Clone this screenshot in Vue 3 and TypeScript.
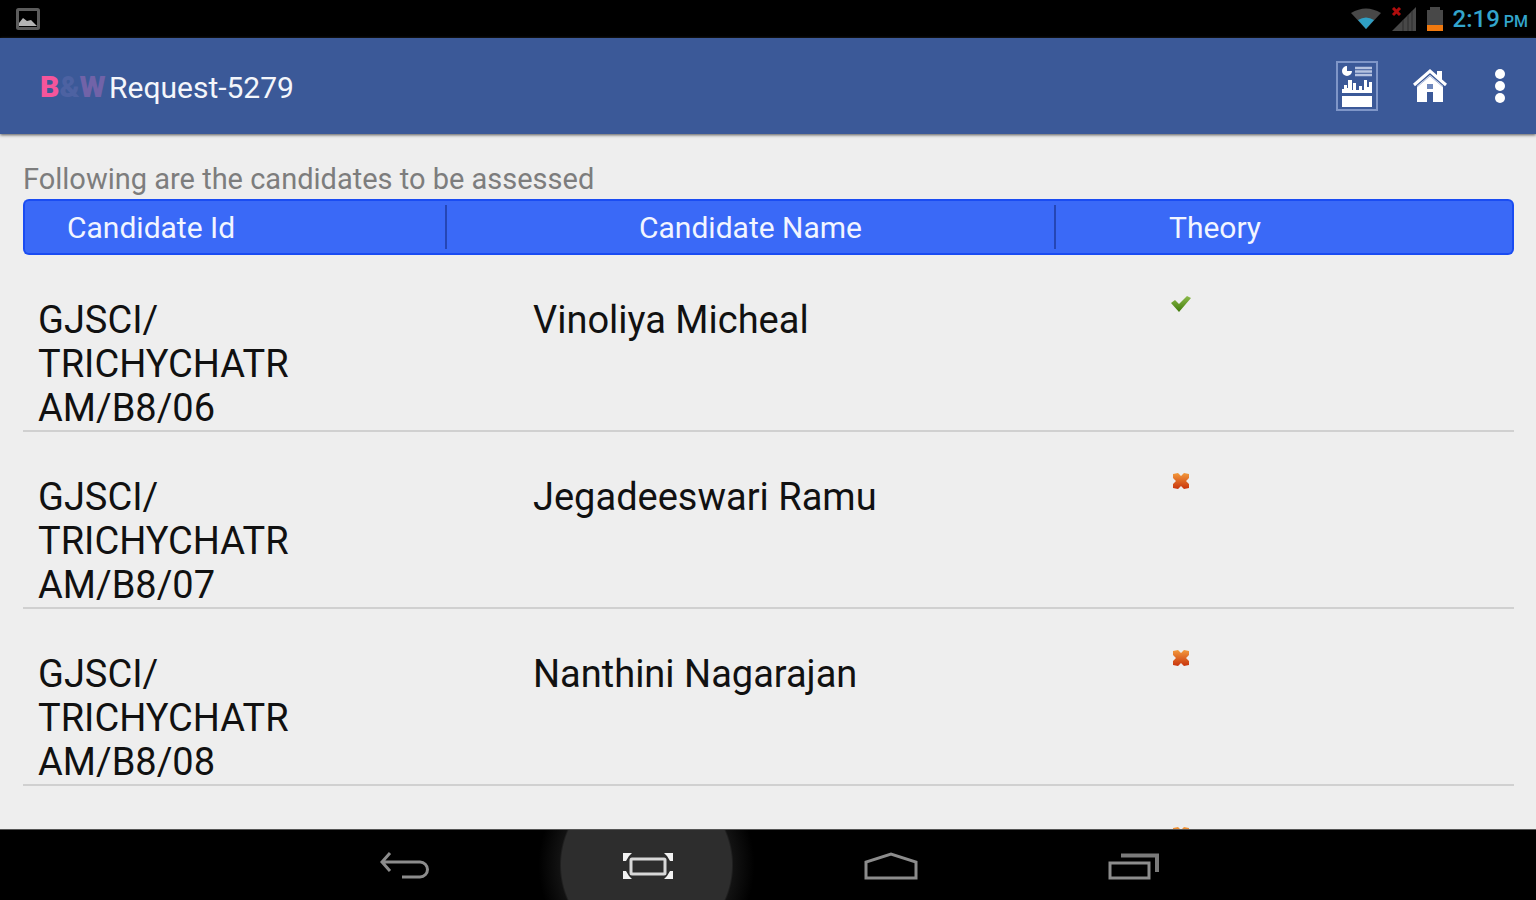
<script setup lang="ts">
interface Candidate {
  id: string[]
  name: string
  passed: boolean
}

const candidates: Candidate[] = [
  { id: ['GJSCI/', 'TRICHYCHATR', 'AM/B8/06'], name: 'Vinoliya Micheal', passed: true },
  { id: ['GJSCI/', 'TRICHYCHATR', 'AM/B8/07'], name: 'Jegadeeswari Ramu', passed: false },
  { id: ['GJSCI/', 'TRICHYCHATR', 'AM/B8/08'], name: 'Nanthini Nagarajan', passed: false },
  { id: [], name: '', passed: false },
]
</script>

<template>
  <div class="screen">
    <div class="status">
      <svg class="picture" width="24" height="22" viewBox="0 0 24 22">
        <rect x="1.5" y="1.5" width="21" height="19" rx="1" fill="none" stroke="#5c5c5c" stroke-width="3" />
        <path d="M3 18v-3l4-5 4 3 4-1 6 6z" fill="#b4b4b4" />
      </svg>
      <div class="tray">
        <svg width="32" height="22" viewBox="0 0 32 22">
          <path d="M1 5Q16-4 31 5L16 21z" fill="#484848" />
          <path d="M8 12Q16 7 24 12L16 21z" fill="#2f9fc4" />
        </svg>
        <svg width="26" height="25" viewBox="0 0 26 25">
          <path d="M1 24L25 0v24z" fill="#484848" />
          <path d="M12 13v11M17 8v16M21 4v20" stroke="#2c2c2c" stroke-width="1" />
          <path d="M2 1l7 7M9 1l-7 7" stroke="#b00d0d" stroke-width="3" />
        </svg>
        <svg width="18" height="24" viewBox="0 0 18 24">
          <path d="M1 24V3h3V0h10v3h3v21z" fill="#484848" />
          <rect x="1" y="18" width="16" height="6" fill="#f0790f" />
        </svg>
        <span class="clock">2:19<small>PM</small></span>
      </div>
    </div>

    <header class="bar">
      <span class="logo"><b>B</b><i>&amp;</i><em>W</em></span>
      <h1>Request-5279</h1>
      <div class="actions">
        <button type="button" aria-label="Report">
          <svg width="42" height="50" viewBox="0 0 42 50">
            <rect x="1" y="1" width="40" height="48" fill="none" stroke="#7f96c8" stroke-width="2" />
            <path d="M11 5v5h5a5 5 0 1 1-5-5z" fill="#fff" />
            <path d="M19 7h17M19 10.500h17M19 14h17" stroke="#b6c3e0" stroke-width="2.500" />
            <path d="M6 32v-4h2v-4h3v3h1v-8h4v10h1v-7h3v7h3v-4h3v4h2v-10h3v7h2v-5h3v11z" fill="#fff" />
            <rect x="6" y="35" width="30" height="11" fill="#fff" />
          </svg>
        </button>
        <button type="button" aria-label="Home">
          <svg width="34" height="34" viewBox="0 0 34 34">
            <path d="M4 17L17 6l13 11v16H20V23h-6v10H4z" fill="#fff" />
            <path d="M24 2h5v10l-5-4z" fill="#fff" />
            <path d="M1 16L17 2l16 14" fill="none" stroke="#fff" stroke-width="3" />
            <path d="M4 18L17 7l13 11" fill="none" stroke="#a9b8da" stroke-width="1" />
            <rect x="14" y="15" width="6" height="5" fill="#6f88bd" />
          </svg>
        </button>
        <button type="button" aria-label="More options">
          <svg width="12" height="36" viewBox="0 0 12 36">
            <g fill="#fff"><circle cx="6" cy="6" r="5" /><circle cx="6" cy="18" r="5" /><circle cx="6" cy="30" r="5" /></g>
          </svg>
        </button>
      </div>
    </header>

    <main class="content">
      <p>Following are the candidates to be assessed</p>
      <table>
        <thead>
          <tr>
            <th class="id" scope="col"><span>Candidate Id</span></th>
            <th class="name" scope="col"><span>Candidate Name</span></th>
            <th class="theory" scope="col"><span>Theory</span></th>
          </tr>
        </thead>
        <tbody>
          <tr v-for="(c, i) in candidates" :key="i">
            <td class="id"><div v-for="line in c.id" :key="line">{{ line }}</div></td>
            <td class="name">{{ c.name }}</td>
            <td class="theory">
              <svg v-if="c.passed" width="20" height="20" viewBox="0 0 20 20" role="img" aria-label="Passed">
                <defs>
                  <linearGradient id="ok" x1="0" y1="0" x2="0" y2="1">
                    <stop offset="0" stop-color="#8dbb4c" /><stop offset="1" stop-color="#3f7a08" />
                  </linearGradient>
                </defs>
                <path d="M0 9l4-3 4 4 8-8 4 2L8 18z" fill="url(#ok)" />
              </svg>
              <svg v-else width="20" height="20" viewBox="0 0 20 20" role="img" aria-label="Not passed">
                <defs>
                  <linearGradient id="no" x1="0" y1="0" x2="0" y2="1">
                    <stop offset="0" stop-color="#f39a3c" /><stop offset="1" stop-color="#c8330c" />
                  </linearGradient>
                </defs>
                <path d="M2 3l5-1 3 3 3-3 5 1v4l-3 3 3 3v4l-5 1-3-3-3 3-5-1v-4l3-3-3-3z" fill="url(#no)" />
              </svg>
            </td>
          </tr>
        </tbody>
      </table>
    </main>

    <nav class="nav">
      <button type="button" aria-label="Back">
        <svg width="50" height="28" viewBox="0 0 50 28">
          <path d="M10 1L2 10l8 9M2 10h38a7.500 7.500 0 0 1 0 15H22" fill="none" stroke="#8c8c8c" stroke-width="3" />
        </svg>
      </button>
      <button type="button" class="pressed" aria-label="Screenshot">
        <svg width="52" height="28" viewBox="0 0 52 28">
          <rect x="9" y="7" width="34" height="15" rx="1" fill="none" stroke="#d8d8d8" stroke-width="3" />
          <path d="M1 1h9l-3 3-3 5H1zM51 1h-9l3 3 3 5h3zM1 27h9l-3-3-3-5H1zM51 27h-9l3-3 3-5h3z" fill="#f2f2f2" />
        </svg>
      </button>
      <button type="button" aria-label="Home screen">
        <svg width="54" height="28" viewBox="0 0 54 28">
          <path d="M2 26V10L27 2l25 8v16z" fill="none" stroke="#8c8c8c" stroke-width="3" />
        </svg>
      </button>
      <button type="button" aria-label="Recent apps">
        <svg width="52" height="28" viewBox="0 0 52 28">
          <rect x="2" y="11" width="39" height="15" fill="none" stroke="#8c8c8c" stroke-width="3" />
          <path d="M13 3.500h36V20" fill="none" stroke="#7a7a7a" stroke-width="4" />
        </svg>
      </button>
    </nav>
  </div>
</template>

<style>
body {
  margin: 0;
}
</style>

<style scoped>
.screen {
  display: flex;
  flex-direction: column;
  height: 100vh;
  overflow: hidden;
  background: #eee;
  color: #111;
  font-family: Roboto, sans-serif;
}
.status {
  display: flex;
  flex: none;
  align-items: center;
  justify-content: space-between;
  height: 38px;
  padding: 0 8px 0 16px;
  background: #000;
}
.tray {
  display: flex;
  align-items: center;
  gap: 9px;
}
.clock {
  color: #33a5cc;
  font-size: 24px;
  font-weight: 500;
}
.clock small {
  margin-left: 4px;
  font-size: 16px;
}
.bar {
  display: flex;
  flex: none;
  align-items: center;
  height: 96px;
  padding: 0 30px 0 40px;
  background: #3b5998;
  box-shadow: 0 1px 3px #555;
  z-index: 1;
}
.logo {
  display: flex;
  width: 69px;
  font: 900 30px Roboto, sans-serif;
}
.logo b { color: #f5559b; }
.logo i { color: #4d62a2; font-style: normal; }
.logo em { color: #7163a8; font-style: normal; }
h1 {
  margin: 0;
  padding-top: 2px;
  color: #f4f6fb;
  font-size: 30px;
  font-weight: 400;
}
.actions {
  display: flex;
  align-items: center;
  gap: 35px;
  margin-left: auto;
}
button {
  display: flex;
  align-items: center;
  justify-content: center;
  padding: 0;
  border: 0;
  background: none;
}
.actions button:last-child {
  margin-left: 12px;
}
.content {
  flex: 1;
  min-height: 0;
  overflow: hidden;
  padding: 25px 22px 0 23px;
}
p {
  margin: 0;
  color: #7d7d7d;
  font-size: 29px;
  line-height: 40px;
}
table {
  width: 100%;
  table-layout: fixed;
  border-spacing: 0;
}
th {
  height: 44px;
  padding: 4px 0;
  border: solid #1a4cf2;
  border-width: 2px 0;
  background: #3a69f7;
  color: #f2f5ff;
  font-size: 30px;
  font-weight: 400;
}
th span {
  display: block;
  padding-top: 2px;
  line-height: 42px;
}
th.id {
  width: 424px;
  border-left-width: 2px;
  border-radius: 6px 0 0 6px;
  box-sizing: border-box;
  text-align: left;
}
th.id span {
  padding-left: 42px;
}
th.name {
  width: 609px;
}
th.id span,
th.name span {
  border-right: 2px solid #2546b5;
}
th.theory {
  border-right-width: 2px;
  border-radius: 0 6px 6px 0;
  text-align: left;
}
th.theory span {
  padding-left: 113px;
}
td {
  height: 132px;
  padding: 43px 0 0;
  border-bottom: 2px solid #d0d0d0;
  font-size: 38px;
  line-height: 44px;
  vertical-align: top;
}
td.id {
  padding-left: 15px;
}
td.name {
  padding-left: 86px;
}
td.theory {
  padding: 39px 0 0 115px;
}
td svg {
  display: block;
}
.nav {
  display: flex;
  flex: none;
  justify-content: center;
  height: 71px;
  border-top: 1px solid #555;
  box-sizing: border-box;
  background: #000;
}
.nav button {
  width: 243px;
  padding: 2px 0 0 2px;
}
.nav .pressed {
  background: radial-gradient(circle, #2d2d2d 0 85px, #121212 87px, #000 108px);
}
</style>
